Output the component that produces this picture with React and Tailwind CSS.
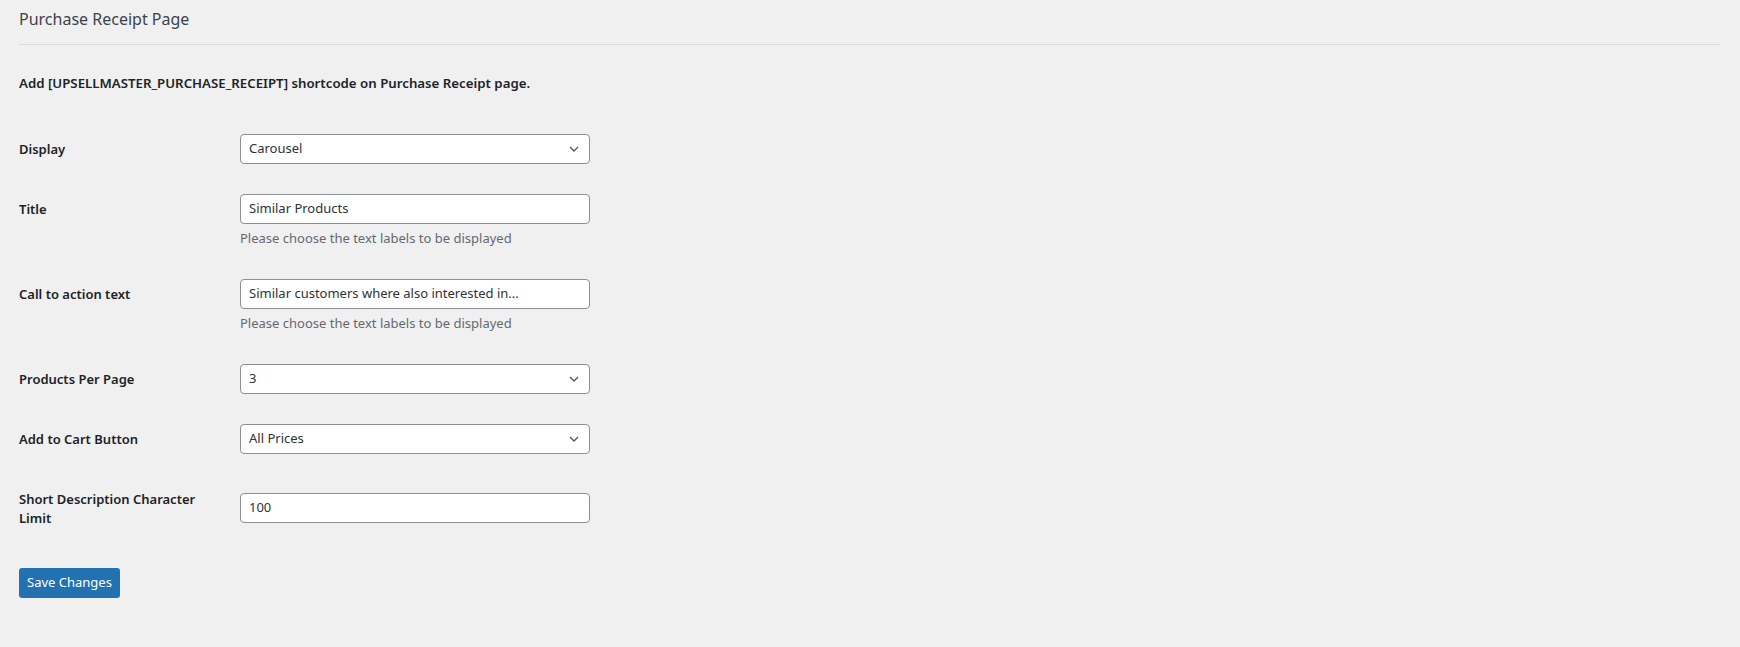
import React from 'react';

const Chevron = () => (
  <svg width="10" height="6" viewBox="0 0 10 6" className="absolute right-[10px] top-1/2 -translate-y-1/2">
    <polyline points="1,1 5,5 9,1" fill="none" stroke="#50575e" strokeWidth="1.3" />
  </svg>
);

const SelectBox = ({ value }) => (
  <div className="relative flex h-[30px] w-[350px] items-center rounded-[4px] border border-[#8c8f94] bg-white pl-[8px] text-[13px] text-[#2c3338]">
    {value}
    <Chevron />
  </div>
);

const TextBox = ({ value }) => (
  <div className="flex h-[30px] w-[350px] items-center rounded-[4px] border border-[#8c8f94] bg-white pl-[8px] text-[13px] text-[#2c3338]">
    {value}
  </div>
);

const Help = () => (
  <p className="mt-[4px] text-[13px] leading-[21px] text-[#646970]">Please choose the text labels to be displayed</p>
);

const Row = ({ label, children, top = 'pt-[15px]' }) => (
  <div className="flex">
    <div className="w-[200px] shrink-0 pt-[21px] text-[13px] font-semibold leading-[19px] text-[#1d2327]">{label}</div>
    <div className={`ml-[21px] pb-[15px] ${top}`}>{children}</div>
  </div>
);

export default function App() {
  return (
    <div className="min-h-screen bg-[#f0f0f1] pl-[19px] pr-[20px] font-['Noto_Sans',sans-serif] text-[#1d2327]">
      <h2 className="pt-[8px] text-[16px] leading-[23px] text-[#3c434a]">Purchase Receipt Page</h2>
      <div className="mt-[13px] h-px bg-[#dcdcde]" />

      <p className="mt-[28px] text-[13.25px] font-semibold leading-[20px]">
        Add [UPSELLMASTER_PURCHASE_RECEIPT] shortcode on Purchase Receipt page.
      </p>

      <div className="mt-[26px]">
        <Row label="Display">
          <SelectBox value="Carousel" />
        </Row>
        <Row label="Title">
          <TextBox value="Similar Products" />
          <Help />
        </Row>
        <Row label="Call to action text">
          <TextBox value="Similar customers where also interested in..." />
          <Help />
        </Row>
        <Row label="Products Per Page">
          <SelectBox value="3" />
        </Row>
        <Row label="Add to Cart Button">
          <SelectBox value="All Prices" />
        </Row>
        <Row label="Short Description Character Limit" top="pt-[24px]">
          <TextBox value="100" />
        </Row>
      </div>

      <button className="mt-[30px] flex h-[30px] w-[101px] items-center justify-center rounded-[3px] bg-[#2271b1] text-[13px] text-white">
        Save Changes
      </button>
    </div>
  );
}
